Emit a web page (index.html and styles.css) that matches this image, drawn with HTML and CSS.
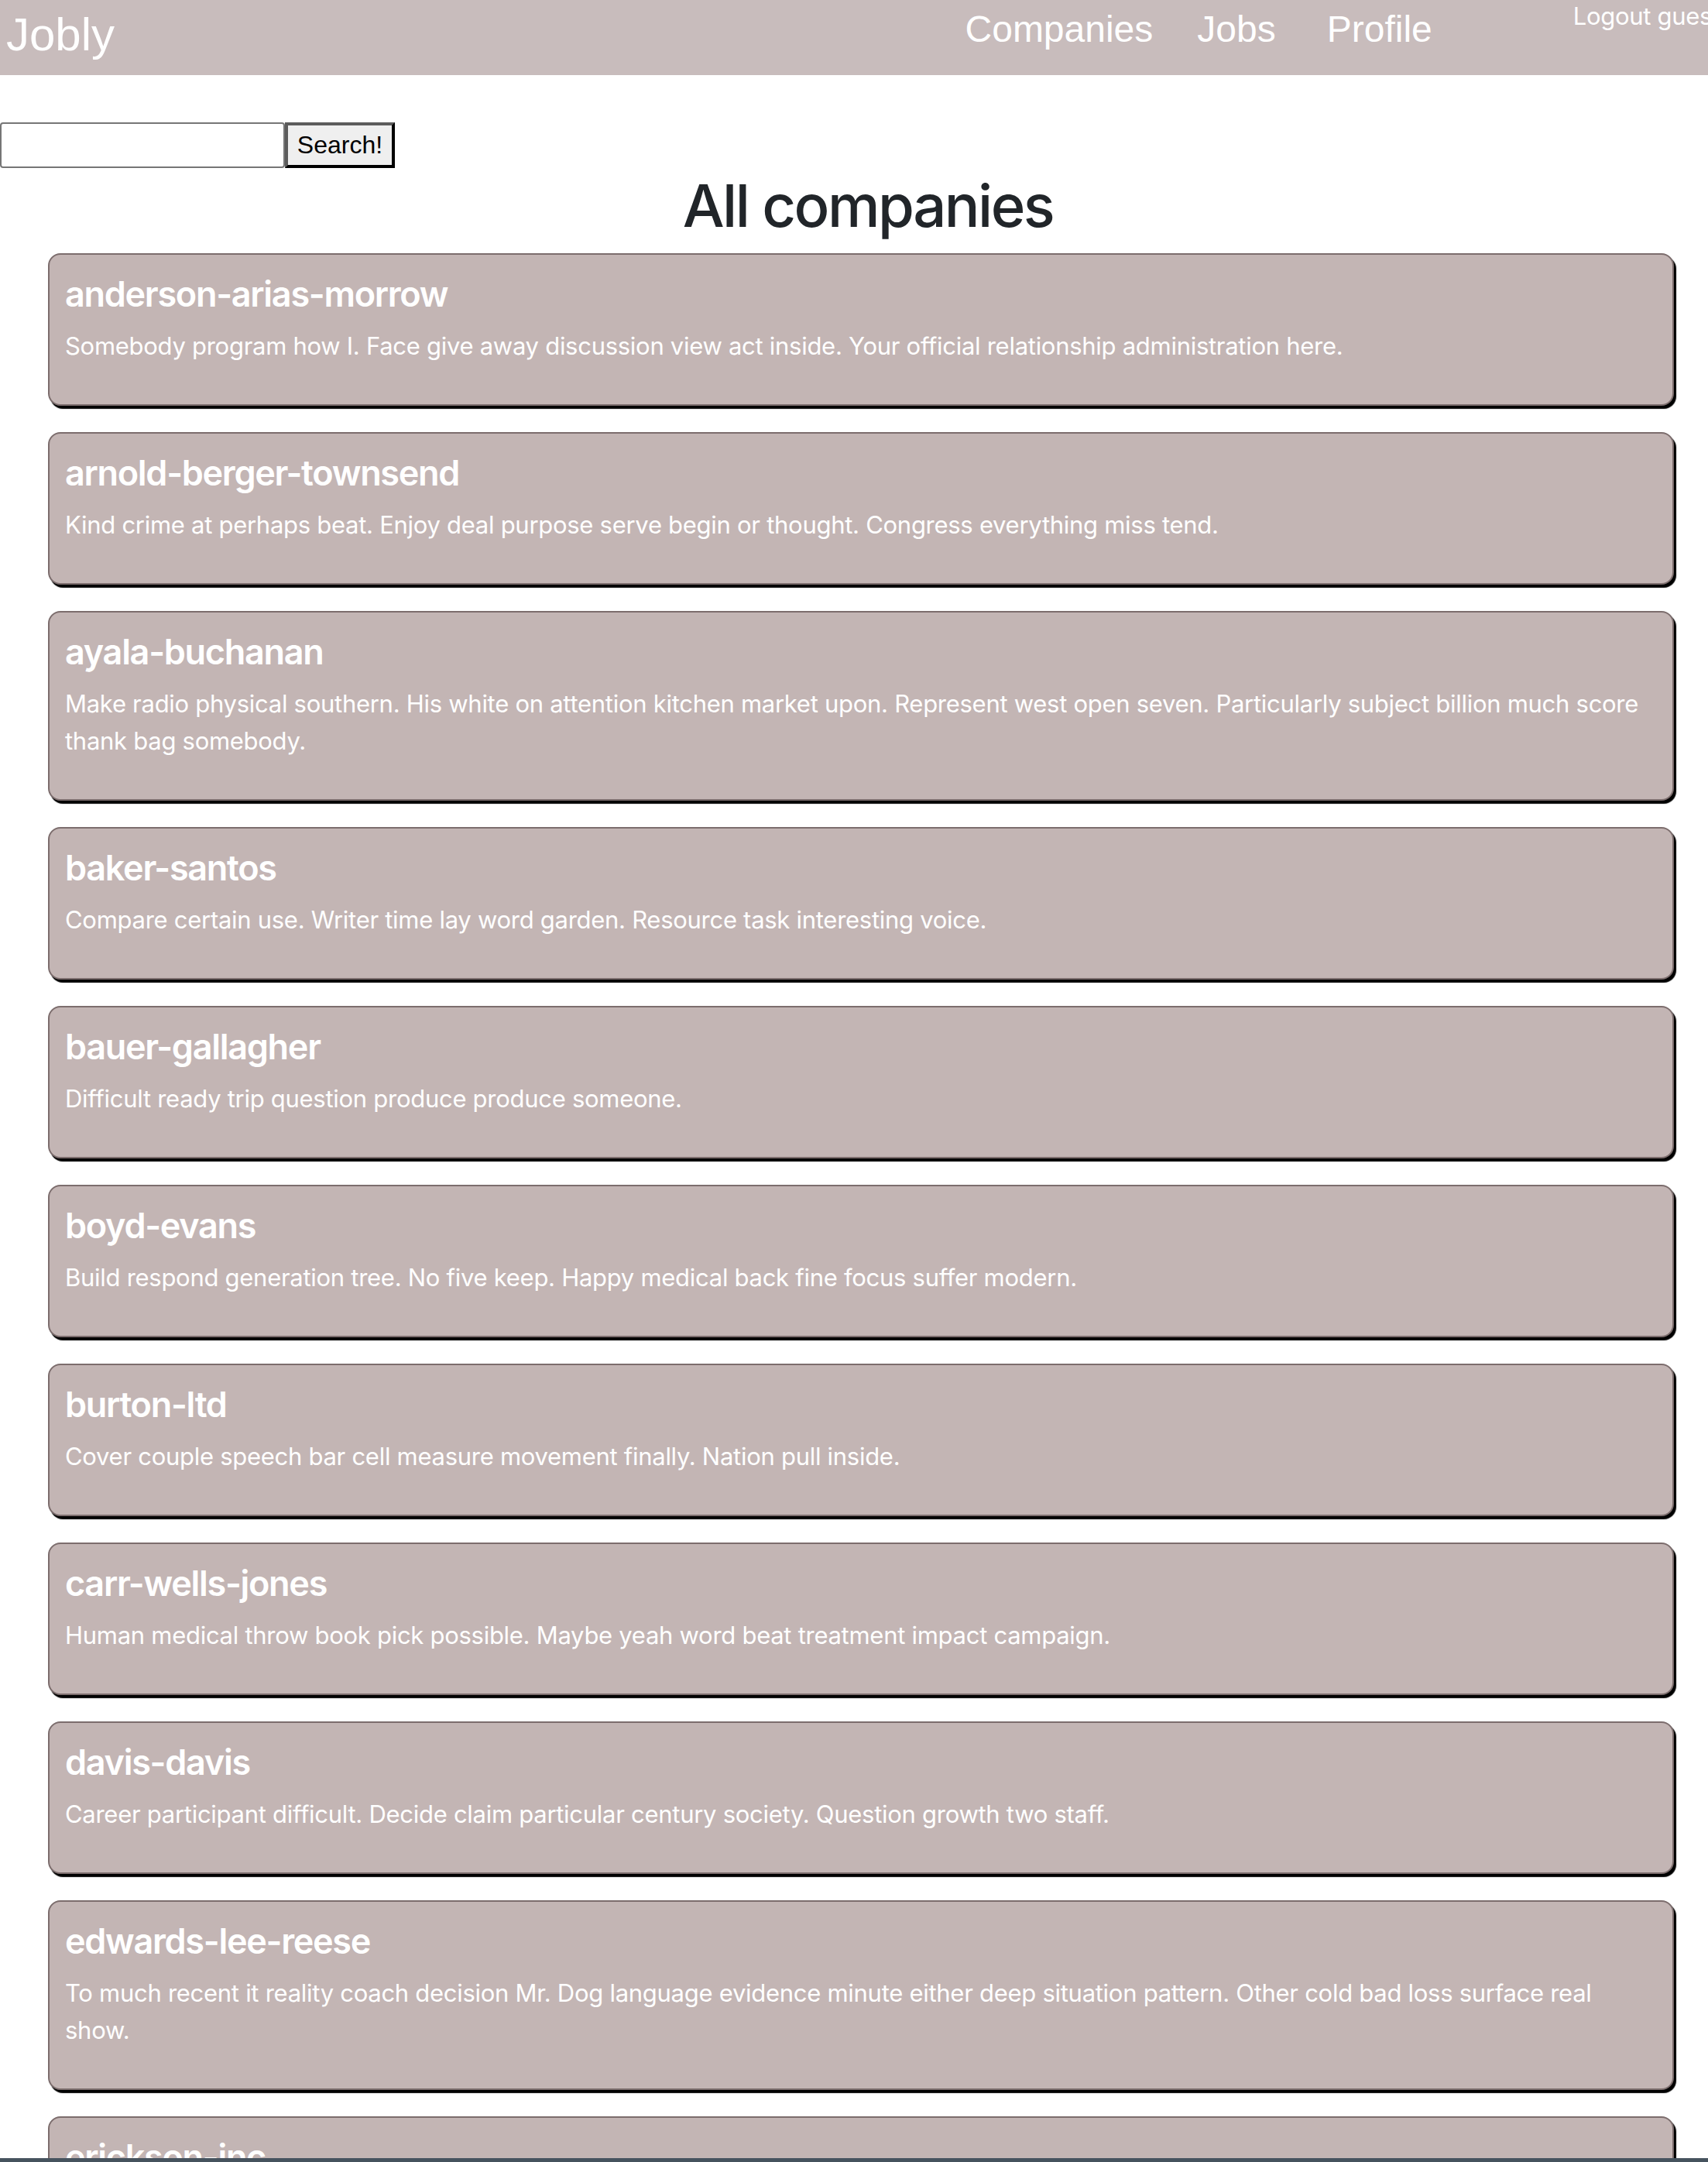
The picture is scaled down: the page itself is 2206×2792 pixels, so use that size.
FILE: index.html
```html
<!DOCTYPE html>
<html lang="en">
<head>
<meta charset="utf-8">
<title>Jobly</title>
<link rel="stylesheet" href="styles.css">
</head>
<body>
<div class="window">
  <header class="navbar">
    <a class="brand" href="#">Jobly</a>
    <nav class="links">
      <a class="nav-link" href="#">Companies</a>
      <a class="nav-link jobs" href="#">Jobs</a>
      <a class="nav-link profile" href="#">Profile</a>
    </nav>
    <a class="logout" href="#">Logout guest</a>
  </header>
  <main>
    <form class="search">
      <input class="search-input" type="text" name="search">
      <button class="search-btn" type="button">Search!</button>
    </form>
    <h1 class="page-title">All companies</h1>
    <div class="list">
      <div class="card">
        <h4 class="card-title">anderson-arias-morrow</h4>
        <p class="card-text">Somebody program how I. Face give away discussion view act inside. Your official relationship administration here.</p>
      </div>
      <div class="card">
        <h4 class="card-title">arnold-berger-townsend</h4>
        <p class="card-text">Kind crime at perhaps beat. Enjoy deal purpose serve begin or thought. Congress everything miss tend.</p>
      </div>
      <div class="card">
        <h4 class="card-title">ayala-buchanan</h4>
        <p class="card-text">Make radio physical southern. His white on attention kitchen market upon. Represent west open seven. Particularly subject billion much score thank bag somebody.</p>
      </div>
      <div class="card">
        <h4 class="card-title">baker-santos</h4>
        <p class="card-text">Compare certain use. Writer time lay word garden. Resource task interesting voice.</p>
      </div>
      <div class="card">
        <h4 class="card-title">bauer-gallagher</h4>
        <p class="card-text">Difficult ready trip question produce produce someone.</p>
      </div>
      <div class="card">
        <h4 class="card-title">boyd-evans</h4>
        <p class="card-text">Build respond generation tree. No five keep. Happy medical back fine focus suffer modern.</p>
      </div>
      <div class="card">
        <h4 class="card-title">burton-ltd</h4>
        <p class="card-text">Cover couple speech bar cell measure movement finally. Nation pull inside.</p>
      </div>
      <div class="card">
        <h4 class="card-title">carr-wells-jones</h4>
        <p class="card-text">Human medical throw book pick possible. Maybe yeah word beat treatment impact campaign.</p>
      </div>
      <div class="card">
        <h4 class="card-title">davis-davis</h4>
        <p class="card-text">Career participant difficult. Decide claim particular century society. Question growth two staff.</p>
      </div>
      <div class="card">
        <h4 class="card-title">edwards-lee-reese</h4>
        <p class="card-text">To much recent it reality coach decision Mr. Dog language evidence minute either deep situation pattern. Other cold bad loss surface real show.</p>
      </div>
      <div class="card">
        <h4 class="card-title">erickson-inc</h4>
        <p class="card-text">Interest summer audience of. Movie either story fine.</p>
      </div>
    </div>
  </main>
</div>
<div class="desktop"></div>
</body>
</html>
```

FILE: styles.css
```css
html, body {
  margin: 0;
  padding: 0;
  overflow: hidden;
  background: #ffffff;
}

body {
  font-family: Inter, "Liberation Sans", sans-serif;
}

.window {
  height: 2787px;
  overflow: hidden;
  background: #ffffff;
}

.desktop {
  height: 5px;
  background: #46535e;
}

a {
  text-decoration: none;
}

/* Navbar */
.navbar {
  display: flex;
  align-items: flex-start;
  height: 97px;
  background: #c8bcbc;
  overflow: hidden;
}

.brand {
  flex: none;
  padding: 10px 0 0 8px;
  font-family: "Liberation Sans", Arial, sans-serif;
  font-size: 60px;
  line-height: 69px;
  color: #ffffff;
}

.links {
  display: flex;
  margin-left: auto;
  padding-top: 10px;
  flex: none;
}

.nav-link {
  font-family: "Liberation Sans", Arial, sans-serif;
  font-size: 48px;
  line-height: 55px;
  color: #ffffff;
}

.nav-link.jobs {
  margin-left: 57px;
}

.nav-link.profile {
  margin-left: 66px;
}

.logout {
  flex: none;
  margin-left: 182px;
  margin-right: -15px;
  padding-top: 1px;
  font-family: Inter, sans-serif;
  font-size: 31px;
  letter-spacing: -0.3px;
  line-height: 39px;
  color: #ffffff;
  white-space: nowrap;
}

/* Search */
.search {
  display: flex;
  margin: 61px 0 0 0;
  height: 59px;
}

.search-input {
  box-sizing: border-box;
  width: 368px;
  height: 59px;
  margin: 0;
  border: 2px solid #767676;
  border-radius: 4px;
  background: #ffffff;
  padding: 0 8px;
  font-size: 32px;
}

.search-btn {
  box-sizing: border-box;
  width: 142px;
  height: 59px;
  margin: 0;
  padding: 0;
  border-style: solid;
  border-width: 4px;
  border-color: #5c5c5c #000000 #000000 #5c5c5c;
  background: #efefef;
  font-family: "Liberation Sans", Arial, sans-serif;
  font-size: 32px;
  color: #000000;
}

/* Title */
.page-title {
  margin: 0 0 14px 0;
  padding: 1px 0 0 36px;
  height: 95px;
  text-align: center;
  font-family: Inter, sans-serif;
  font-weight: 500;
  font-size: 76px;
  letter-spacing: -2.5px;
  line-height: 95px;
  color: #212529;
}

/* Cards */
.list {
  display: flex;
  flex-direction: column;
  gap: 34px;
  margin-left: 62px;
  width: 2100px;
}

.card {
  box-sizing: border-box;
  width: 2100px;
  padding: 22px 20px 19px 20px;
  border: 2px solid #7c6d6d;
  border-radius: 16px;
  background: #c3b5b4;
  box-shadow: 3px 4px 1px #000000;
  color: #ffffff;
}

.card-title {
  margin: 0 0 14px 0;
  font-family: Inter, sans-serif;
  font-weight: 600;
  font-size: 45px;
  letter-spacing: -1.3px;
  line-height: 58px;
}

.card-text {
  margin: 0 0 32px 0;
  font-family: Inter, sans-serif;
  font-weight: 400;
  font-size: 31px;
  letter-spacing: -0.28px;
  line-height: 48px;
}
```
